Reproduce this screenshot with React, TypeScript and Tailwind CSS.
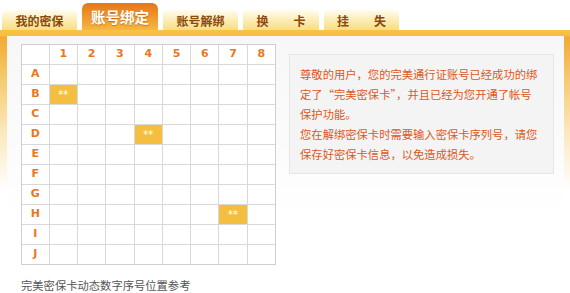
const cols = ["1", "2", "3", "4", "5", "6", "7", "8"];
const rows = ["A", "B", "C", "D", "E", "F", "G", "H", "I", "J"];

// cells holding the dynamic digits: row letter + column number
const marked = new Set(["B1", "D4", "H7"]);

const cjk = "font-['Noto_Sans_CJK_SC','Noto_Sans',sans-serif]";

function Tab({
  label,
  active,
  width,
}: {
  label: React.ReactNode;
  active?: boolean;
  width: string;
}) {
  if (active) {
    return (
      <div
        className={`${width} flex h-[27px] items-center justify-center rounded-t-[6px] bg-[linear-gradient(to_bottom,#e4761c,#ef9a2e_55%,#f5b840)] text-[14.5px] font-bold text-white [text-shadow:0_1px_1px_rgba(160,70,0,0.5)]`}
      >
        {label}
      </div>
    );
  }
  return (
    <div
      className={`${width} flex h-[20px] items-center justify-center rounded-t-[5px] bg-[linear-gradient(to_bottom,#fffcf0,#fdeebb_45%,#fbdc80)] pt-px text-[12px] font-bold text-[#8a4a0c]`}
    >
      {label}
    </div>
  );
}

export default function App() {
  return (
    <div className={`h-[293px] w-[570px] overflow-hidden bg-white ${cjk}`}>
      <div className="flex h-[30px] items-end gap-[5px] pl-[2px]">
        <Tab width="w-[75px]" label="我的密保" />
        <Tab width="w-[76px]" label="账号绑定" active />
        <Tab width="w-[75px]" label="账号解绑" />
        <Tab
          width="w-[76px]"
          label={
            <span className="flex gap-[25px]">
              <span>换</span>
              <span>卡</span>
            </span>
          }
        />
        <Tab
          width="w-[75px]"
          label={
            <span className="flex gap-[25px]">
              <span>挂</span>
              <span>失</span>
            </span>
          }
        />
      </div>

      <div className="h-[263px] bg-[linear-gradient(to_bottom,#f7c347_0px,#f6bd42_6px,#f1aa30_7px,#f6cb70_50px,#fbe7bb_100px,#ffffff_160px)] pl-[7px] pr-[6px] pt-[6px]">
        <div className="h-full bg-[linear-gradient(to_bottom,#f7f7f7,#fbfbfb_40%,#ffffff_70%)] pl-[14px] pt-[8px]">
          <div className="flex items-start gap-[13px]">
            <div>
              <div className="grid grid-cols-[26.7px_repeat(8,27.3px)] gap-px border border-[#cfcfcf] bg-[#d9d9d9] font-['DejaVu_Sans',sans-serif] text-[11px] font-bold text-[#e8781f]">
                <div className="h-[19px] bg-white" />
                {cols.map((c) => (
                  <div
                    key={c}
                    className="flex h-[19px] items-center justify-center bg-white"
                  >
                    {c}
                  </div>
                ))}
                {rows.map((r) => (
                  <div key={r} className="contents">
                    <div className="flex h-[19px] items-center justify-center bg-white">
                      {r}
                    </div>
                    {cols.map((c) =>
                      marked.has(r + c) ? (
                        <div
                          key={c}
                          className="flex h-[19px] items-center justify-center bg-[#f4be40] text-[10px] font-normal text-white"
                        >
                          **
                        </div>
                      ) : (
                        <div key={c} className="h-[19px] bg-white" />
                      ),
                    )}
                  </div>
                ))}
              </div>
              <p className="mt-[12px] text-[11.3px] leading-[16px] text-[#555555]">
                完美密保卡动态数字序号位置参考
              </p>
            </div>

            <div className="mt-[10px] w-[265px] border border-[#e6e6e6] bg-[#f4f4f4] px-[10px] py-[9px] text-[11.3px] leading-[20px] text-[#df571b]">
              <p className="whitespace-nowrap">
                尊敬的用户，您的完美通行证账号已经成功的绑
                <br />
                定了“完美密保卡”，并且已经为您开通了帐号
                <br />
                保护功能。
              </p>
              <p className="whitespace-nowrap">
                您在解绑密保卡时需要输入密保卡序列号，请您
                <br />
                保存好密保卡信息，以免造成损失。
              </p>
            </div>
          </div>
        </div>
      </div>
    </div>
  );
}
